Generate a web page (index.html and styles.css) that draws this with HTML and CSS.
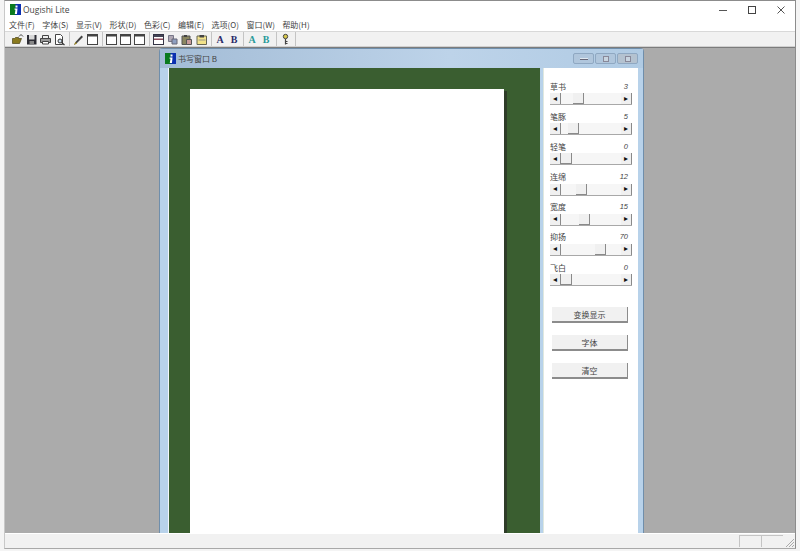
FILE: index.html
```html
<!DOCTYPE html>
<html lang="zh-CN">
<head>
    <meta charset="UTF-8">
    <title>Ougishi Lite</title>
    <link rel="stylesheet" href="styles.css">
</head>
<body>
    <svg class="defs" width="0" height="0">
        <symbol id="app-icon" viewBox="0 0 12 12">
            <rect width="12" height="12" fill="#0a7a1e"/>
            <rect x="6" width="6" height="12" fill="#0b2fb0"/>
            <path d="M6 1.500h2.200v2.200H6zM5 5h3.200l-.6 6H5.200l.8-4.600H5z" fill="#fff"/>
        </symbol>
        <symbol id="pane" viewBox="0 0 13 13">
            <rect x="1.500" y="1.500" width="10" height="10" fill="#fff" stroke="#444"/>
            <rect x="2" y="2" width="9" height="1.500" fill="#444"/>
        </symbol>
    </svg>

    <div class="app">
        <header class="titlebar">
            <svg class="app-icon" width="11" height="11"><use href="#app-icon"/></svg>
            <span class="app-title">Ougishi Lite</span>
            <div class="win-controls">
                <svg width="8" height="8" viewBox="0 0 8 8"><path d="M0 4.500h8" stroke="#555"/></svg>
                <svg width="8" height="8" viewBox="0 0 8 8"><rect x=".5" y=".5" width="7" height="7" fill="none" stroke="#444"/></svg>
                <svg width="8" height="8" viewBox="0 0 8 8"><path d="M.5.5l7 7M7.500.5l-7 7" stroke="#555"/></svg>
            </div>
        </header>

        <nav class="menubar">
            <span class="menu-item">文件(F)</span>
            <span class="menu-item">字体(S)</span>
            <span class="menu-item">显示(V)</span>
            <span class="menu-item">形状(D)</span>
            <span class="menu-item">色彩(C)</span>
            <span class="menu-item">编辑(E)</span>
            <span class="menu-item">选项(O)</span>
            <span class="menu-item">窗口(W)</span>
            <span class="menu-item">帮助(H)</span>
        </nav>

        <div class="toolbar">
            <div class="tool-group">
                <svg class="tool" viewBox="0 0 13 13"><path d="M1.500 10.500V5.500h2l1-1h3v1h3l-2 5z" fill="#8a7a1e" stroke="#4a4416" stroke-width=".7"/><path d="M8 3.500l2-2 2 2" fill="none" stroke="#444"/></svg>
                <svg class="tool" viewBox="0 0 13 13"><path d="M2 2h9.500v9.500H2z" fill="#2c2c34"/><path d="M4 2h5.500v4.500H4z" fill="#d8d8d8"/><path d="M4.500 8h4.500v3.500H4.500z" fill="#888"/></svg>
                <svg class="tool" viewBox="0 0 13 13"><path d="M3.500 2.500h6v3h-6z" fill="#eee" stroke="#444"/><path d="M1.500 5.500h10v4h-10z" fill="#999" stroke="#444"/><path d="M3.500 8.500h6v2.500h-6z" fill="#fff" stroke="#444"/></svg>
                <svg class="tool" viewBox="0 0 13 13"><path d="M2.500 1.500h5l2 2v8h-7z" fill="#fff" stroke="#444"/><circle cx="7" cy="8" r="2" fill="#cfe0ee" stroke="#333"/><path d="M8.500 9.500l3 2.500" stroke="#333" stroke-width="1.200"/></svg>
            </div>
            <div class="tool-group">
                <svg class="tool" viewBox="0 0 13 13"><path d="M2 12l1.500-3 6-6.500 1.500 1.500-6 6z" fill="#444"/><path d="M2 12l1.500-3 1.500 1.500z" fill="#a08a20"/></svg>
                <svg class="tool"><use href="#pane"/></svg>
            </div>
            <div class="tool-group">
                <svg class="tool"><use href="#pane"/></svg>
                <svg class="tool"><use href="#pane"/></svg>
                <svg class="tool"><use href="#pane"/></svg>
            </div>
            <div class="tool-group wide">
                <svg class="tool" viewBox="0 0 13 13"><rect x="1.500" y="1.500" width="10" height="10" fill="#fff" stroke="#334"/><rect x="2" y="2" width="9" height="2" fill="#445"/><rect x="2" y="5.500" width="9" height="1.500" fill="#8c4a5a"/></svg>
                <svg class="tool" viewBox="0 0 13 13"><path d="M2.500 2.500h5v6h-5z" fill="#b0a8b4" stroke="#778"/><path d="M6 6h5v5H6z" fill="#8e9fc0" stroke="#667"/></svg>
                <svg class="tool" viewBox="0 0 13 13"><path d="M2 3h8v8.500H2z" fill="#8a8660" stroke="#555"/><path d="M4 2h3v2H4z" fill="#444"/><path d="M6.500 6.500h5v5h-5z" fill="#c89a9a" stroke="#555"/></svg>
                <svg class="tool" viewBox="0 0 13 13"><path d="M2 3h9.500v8.500H2z" fill="#f2e28a" stroke="#665"/><path d="M4.500 2h4.500v2.500H4.500z" fill="#444"/><path d="M3.500 7h7" stroke="#998"/></svg>
            </div>
            <div class="tool-group tight">
                <span class="tool-letter dark">A</span>
                <span class="tool-letter dark">B</span>
            </div>
            <div class="tool-group">
                <span class="tool-letter teal">A</span>
                <span class="tool-letter teal">B</span>
            </div>
            <div class="tool-group">
                <svg class="tool" viewBox="0 0 13 13"><circle cx="6.500" cy="3.500" r="2.200" fill="#d8c84a" stroke="#444"/><path d="M6.500 6v5.500M6.500 8.500h2M6.500 10.500h2" stroke="#444" stroke-width="1.200"/></svg>
            </div>
        </div>

        <main class="workspace">
            <section class="child-window">
                <div class="child-titlebar">
                    <svg class="child-icon" width="11" height="11"><use href="#app-icon"/></svg>
                    <span class="child-title">书写窗口 B</span>
                    <div class="child-controls">
                        <button class="child-btn"><i class="glyph-min"></i></button>
                        <button class="child-btn"><i class="glyph-max"></i></button>
                        <button class="child-btn close"><i class="glyph-close"></i></button>
                    </div>
                </div>
                <div class="child-body">
                    <div class="canvas-area">
                        <div class="paper"></div>
                    </div>
                    <aside class="controls">
                        <div class="param">
                            <div class="param-head"><span>草书</span><em>3</em></div>
                            <div class="slider"><b class="arrow">◂</b><div class="track"><div class="thumb" style="margin-left:12px"></div></div><b class="arrow">▸</b></div>
                        </div>
                        <div class="param">
                            <div class="param-head"><span>笔豚</span><em>5</em></div>
                            <div class="slider"><b class="arrow">◂</b><div class="track"><div class="thumb" style="margin-left:7px"></div></div><b class="arrow">▸</b></div>
                        </div>
                        <div class="param">
                            <div class="param-head"><span>轻笔</span><em>0</em></div>
                            <div class="slider"><b class="arrow">◂</b><div class="track"><div class="thumb" style="margin-left:0"></div></div><b class="arrow">▸</b></div>
                        </div>
                        <div class="param">
                            <div class="param-head"><span>连绵</span><em>12</em></div>
                            <div class="slider"><b class="arrow">◂</b><div class="track"><div class="thumb" style="margin-left:15px"></div></div><b class="arrow">▸</b></div>
                        </div>
                        <div class="param">
                            <div class="param-head"><span>宽度</span><em>15</em></div>
                            <div class="slider"><b class="arrow">◂</b><div class="track"><div class="thumb" style="margin-left:18px"></div></div><b class="arrow">▸</b></div>
                        </div>
                        <div class="param">
                            <div class="param-head"><span>抑扬</span><em>70</em></div>
                            <div class="slider"><b class="arrow">◂</b><div class="track"><div class="thumb" style="margin-left:34px"></div></div><b class="arrow">▸</b></div>
                        </div>
                        <div class="param">
                            <div class="param-head"><span>飞白</span><em>0</em></div>
                            <div class="slider"><b class="arrow">◂</b><div class="track"><div class="thumb" style="margin-left:0"></div></div><b class="arrow">▸</b></div>
                        </div>
                        <div class="actions">
                            <button class="action">变换显示</button>
                            <button class="action">字体</button>
                            <button class="action">清空</button>
                        </div>
                    </aside>
                </div>
            </section>
        </main>

        <footer class="statusbar">
            <div class="status-cell"></div>
            <div class="status-cell"></div>
            <svg class="grip" width="10" height="10" viewBox="0 0 10 10"><path d="M9 1L1 9M9 4L4 9M9 7L7 9" stroke="#aaa"/></svg>
        </footer>
    </div>
</body>
</html>
```

FILE: styles.css
```css
* {
    margin: 0;
    padding: 0;
    box-sizing: border-box;
    font-family: "Noto Sans CJK SC", "Liberation Sans", sans-serif;
}
html, body {
    width: 800px;
    height: 551px;
    overflow: hidden;
    background: #f4f4f4;
}
.defs {
    position: absolute;
}
.app {
    width: 792px;
    height: 549px;
    margin-left: 4px;
    display: flex;
    flex-direction: column;
    background: #fff;
    border-top: 1px solid #8c8c8c;
    border-left: 1px solid #c8c8c8;
    border-right: 1px solid #8c8c8c;
    border-bottom: 1px solid #a8a8a8;
}
.titlebar {
    height: 17px;
    display: flex;
    align-items: center;
    padding-left: 5px;
}
.app-title {
    margin-left: 2px;
    font-family: "Open Sans", sans-serif;
    font-size: 8.500px;
    color: #444;
}
.win-controls {
    margin-left: auto;
    display: flex;
    gap: 21px;
    padding-right: 10px;
}
.menubar {
    height: 13px;
    display: flex;
    align-items: center;
    padding-left: 4px;
    gap: 7.500px;
}
.menu-item {
    font-size: 8px;
    color: #444;
    white-space: nowrap;
}
.toolbar {
    height: 16px;
    display: flex;
    align-items: center;
    padding-left: 5px;
    background: #f1f1f1;
    border-top: 1px solid #d8d8d8;
    border-bottom: 1px solid #d0d0d0;
}
.tool-group {
    display: flex;
    align-items: center;
    gap: 1px;
    height: 100%;
    padding: 0 3px 0 1px;
    margin-right: 1px;
    border-right: 1px solid #c4c4c4;
}
.tool-group.wide {
    gap: 1.200px;
}
.tool-group.tight {
    padding-right: 2px;
}
.tool {
    width: 13px;
    height: 13px;
}
.tool-letter {
    width: 13px;
    text-align: center;
    font-family: "Liberation Serif", serif;
    font-size: 10px;
    font-weight: bold;
}
.tool-letter.dark {
    color: #2a2a6a;
}
.tool-letter.teal {
    color: #2a9a9a;
}
.workspace {
    flex: 1;
    position: relative;
    overflow: hidden;
    background: #ababab;
    border-top: 1px solid #7c7c7c;
}
/* child window sits on the MDI desktop */
.child-window {
    position: absolute;
    left: 154px;
    top: 0;
    width: 485px;
    height: 520px;
    display: flex;
    flex-direction: column;
    background: #b8d2ea;
    border: 1px solid #6f8eab;
    border-bottom: none;
    border-radius: 4px 4px 0 0;
    padding: 0 4px 0 8px;
}
.child-titlebar {
    height: 19px;
    margin: 0 -4px 0 -8px;
    padding: 0 5px;
    display: flex;
    align-items: center;
    background: linear-gradient(to right, #a3bcd6, #bdd3e9 60%, #b0cbe4);
}
.child-title {
    margin-left: 2px;
    font-size: 8px;
    color: #444;
}
.child-controls {
    margin-left: auto;
    display: flex;
    gap: 1px;
}
.child-btn {
    width: 21px;
    height: 11px;
    display: flex;
    align-items: center;
    justify-content: center;
    background: #b0c6dc;
    border: 1px solid #8fa8c2;
    border-radius: 2px;
}
.child-btn.close {
    background: #b4c2d0;
}
.glyph-min {
    width: 8px;
    height: 2px;
    background: #dfe8f0;
    border-bottom: 1px solid #667;
}
.glyph-max, .glyph-close {
    width: 6px;
    height: 6px;
    border: 1px solid #889;
    background: #c8d4e0;
}
.child-body {
    flex: 1;
    display: flex;
    min-height: 0;
    gap: 3px;
    border-left: 1px solid #f2f7fb;
}
.canvas-area {
    width: 371px;
    background: #3a5e30;
    padding: 21px 0 0 21px;
    overflow: hidden;
}
.paper {
    width: 314px;
    height: 470px;
    background: #fff;
    box-shadow: 3px 2px 0 #2e3c28;
}
.controls {
    width: 95px;
    background: #fff;
    padding: 12px 6px 0 6px;
    border-left: 1px solid #dfe8df;
}
.param {
    height: 30.200px;
}
.param-head {
    height: 12px;
    margin-bottom: 1px;
    display: flex;
    justify-content: space-between;
    align-items: center;
    padding-right: 4px;
    font-size: 8px;
    color: #444;
}
.param-head em {
    font-family: "Liberation Sans", sans-serif;
    font-size: 7.500px;
}
.slider {
    width: 82px;
    height: 12px;
    display: flex;
    background: #f1f1f1;
    border-bottom: 1px solid #a8a8a8;
}
.arrow {
    width: 11px;
    display: flex;
    align-items: center;
    justify-content: center;
    font-family: "DejaVu Sans", sans-serif;
    font-size: 8px;
    font-weight: normal;
    line-height: 1;
    color: #111;
    background: #f0f0f0;
    border-right: 1px solid #8a8a8a;
}
.track {
    flex: 1;
    background: #f6f6f6;
}
.thumb {
    width: 11px;
    height: 100%;
    background: #f0f0f0;
    border-right: 1px solid #8a8a8a;
    border-bottom: 1px solid #8a8a8a;
}
.actions {
    display: flex;
    flex-direction: column;
    gap: 12px;
    padding: 16px 0 0 2px;
}
.action {
    width: 76px;
    height: 16px;
    font-size: 8px;
    color: #444;
    background: #f1f1f1;
    border: none;
    border-right: 1px solid #8c8c8c;
    border-bottom: 2px solid #8c8c8c;
}
.statusbar {
    height: 15px;
    display: flex;
    align-items: center;
    justify-content: flex-end;
    background: #f1f1f1;
    border-top: 1px solid #fff;
}
.status-cell {
    width: 22px;
    height: 12px;
    border-top: 1px solid #c4c4c4;
    border-left: 1px solid #c4c4c4;
}
.grip {
    margin: 3px 0 0 2px;
}
```
